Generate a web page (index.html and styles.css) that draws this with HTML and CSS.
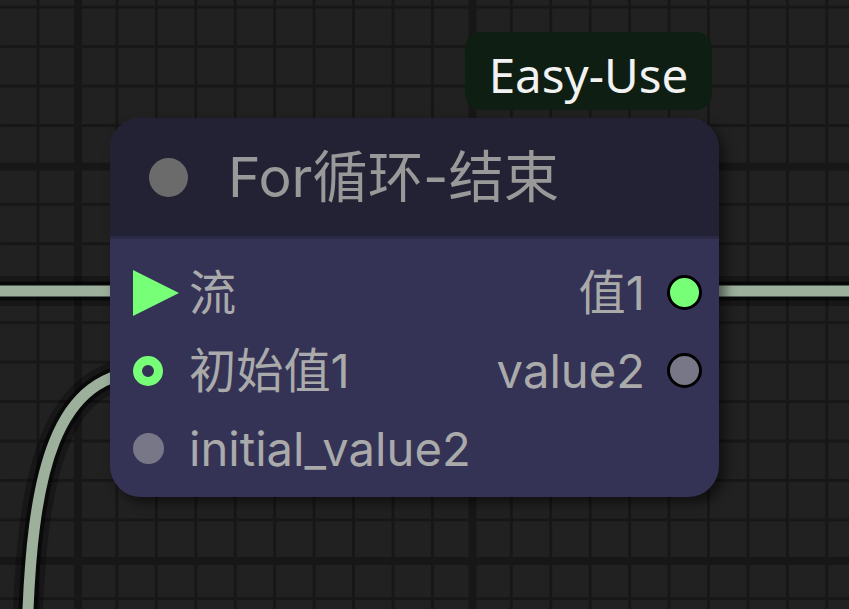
FILE: index.html
```html
<!DOCTYPE html>
<html lang="zh">
<head>
<meta charset="utf-8">
<title>For循环-结束</title>
<link rel="stylesheet" href="styles.css">
</head>
<body>
<div class="canvas">
  <svg class="links" width="849" height="609" viewBox="0 0 849 609">
    <g class="halo-wide">
      <path d="M -10 291 L 120 291"/>
      <path d="M 700 291 L 860 291"/>
      <path d="M 27 640 C 31 470, 55 371, 150 371"/>
    </g>
    <g class="halo">
      <path d="M -10 291 L 120 291"/>
      <path d="M 700 291 L 860 291"/>
      <path d="M 27 640 C 31 470, 55 371, 150 371"/>
    </g>
    <g class="wire">
      <path d="M -10 291 L 120 291"/>
      <path d="M 700 291 L 860 291"/>
      <path d="M 27 640 C 31 470, 55 371, 150 371"/>
    </g>
  </svg>

  <div class="badge">Easy-Use</div>

  <div class="node">
    <div class="node-title">
      <span class="title-dot"></span>
      <span class="title-text">For循环-结束</span>
    </div>
    <div class="node-body">
      <div class="row">
        <div class="slot-in">
          <span class="icon"><svg width="46" height="46" viewBox="0 0 46 46"><polygon points="0,0 46,23 0,46" fill="#77ff77"/></svg></span>
          <span class="label">流</span>
        </div>
        <div class="slot-out">
          <span class="label">值1</span>
          <span class="out-dot connected"></span>
        </div>
      </div>
      <div class="row">
        <div class="slot-in">
          <span class="icon"><span class="ring"></span></span>
          <span class="label">初始值1</span>
        </div>
        <div class="slot-out">
          <span class="label">value2</span>
          <span class="out-dot"></span>
        </div>
      </div>
      <div class="row">
        <div class="slot-in">
          <span class="icon"><span class="dot"></span></span>
          <span class="label">initial_value2</span>
        </div>
      </div>
    </div>
  </div>
</div>
</body>
</html>
```

FILE: styles.css
```css
html, body {
  margin: 0;
  padding: 0;
  overflow: hidden;
}

.canvas {
  position: relative;
  width: 849px;
  height: 609px;
  overflow: hidden;
  background-color: #212121;
  background-image:
    linear-gradient(90deg, #171717 0, #171717 8px, transparent 8px),
    linear-gradient(180deg, #171717 0, #171717 8px, transparent 8px),
    linear-gradient(90deg, #171717 0, #171717 3px, transparent 3px),
    linear-gradient(180deg, #171717 0, #171717 3px, transparent 3px);
  background-size: 394.5px 100%, 100% 394.5px, 39.45px 100%, 100% 39.45px;
  background-position: 74px 0, 0 162.5px, 36.55px 0, 0 5.7px;
  font-family: Inter, "Noto Sans CJK SC", sans-serif;
}

.links {
  position: absolute;
  left: 0;
  top: 0;
}

.links path {
  fill: none;
  stroke-linecap: butt;
}

.halo-wide path {
  stroke: rgba(0, 0, 0, 0.3);
  stroke-width: 30;
}

.halo path {
  stroke: rgba(0, 0, 0, 0.55);
  stroke-width: 19;
}

.wire path {
  stroke: #9cb09c;
  stroke-width: 11;
}

.badge {
  position: absolute;
  left: 465px;
  top: 32px;
  height: 78px;
  width: 247px;
  box-sizing: border-box;
  border-radius: 16px;
  background: #0f1e12;
  color: #f2f2f2;
  font-family: "Noto Sans", sans-serif;
  font-size: 47.5px;
  display: flex;
  align-items: center;
  justify-content: center;
  padding-top: 6px;
}

.node {
  position: absolute;
  left: 110px;
  top: 118px;
  width: 609px;
  height: 379px;
  border-radius: 31px;
  background: #343356;
  box-shadow: 6px 6px 12px rgba(0, 0, 0, 0.5);
  overflow: hidden;
  display: flex;
  flex-direction: column;
}

.node-title {
  height: 118px;
  background: #232234;
  border-bottom: 3px solid #2b2a45;
  display: flex;
  align-items: center;
  padding-left: 39px;
  gap: 40px;
}

.title-dot {
  width: 39px;
  height: 39px;
  border-radius: 50%;
  background: #6b6b6b;
  flex: none;
}

.title-text {
  color: #999999;
  font-size: 55.3px;
  line-height: 1;
  white-space: nowrap;
}

.node-body {
  padding-top: 15px;
  display: flex;
  flex-direction: column;
}

.row {
  height: 78px;
  display: flex;
  align-items: center;
  justify-content: space-between;
}

.slot-in {
  display: flex;
  align-items: center;
  padding-left: 23px;
  gap: 10px;
}

.icon {
  width: 46px;
  height: 46px;
  display: flex;
  align-items: center;
  justify-content: flex-start;
  flex: none;
}

.icon svg {
  display: block;
}

.ring {
  width: 30px;
  height: 30px;
  box-sizing: border-box;
  border-radius: 50%;
  border: 9px solid #77ff77;
  background: #343356;
}

.dot {
  width: 31px;
  height: 31px;
  border-radius: 50%;
  background: #777788;
}

.label {
  color: #aaaaaa;
  font-size: 47.2px;
  line-height: 1;
  white-space: nowrap;
}

.slot-out {
  display: flex;
  align-items: center;
  gap: 22px;
  padding-right: 17px;
}

.out-dot {
  width: 35px;
  height: 35px;
  box-sizing: border-box;
  border-radius: 50%;
  border: 3.5px solid #000000;
  background: #777788;
  flex: none;
}

.out-dot.connected {
  background: #77ff77;
}
```
